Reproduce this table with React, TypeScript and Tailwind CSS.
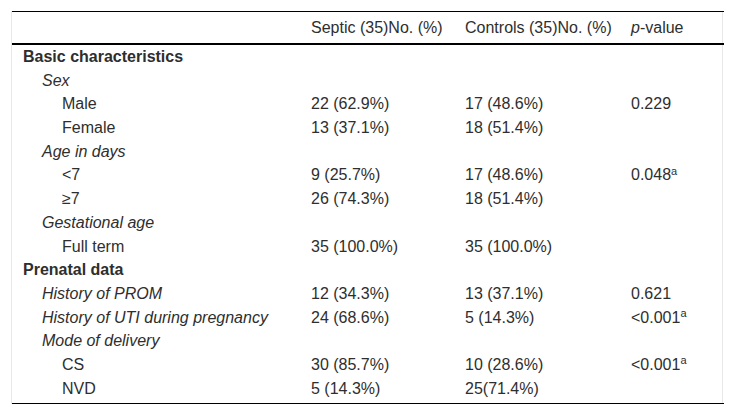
import React from "react";

type Row = {
  label: string;
  level: 0 | 1 | 2;
  kind: "bold" | "italic" | "normal";
  a?: string;
  b?: string;
  p?: string;
  sup?: boolean;
};

const rows: Row[] = [
  { label: "Basic characteristics", level: 0, kind: "bold" },
  { label: "Sex", level: 1, kind: "italic" },
  { label: "Male", level: 2, kind: "normal", a: "22 (62.9%)", b: "17 (48.6%)", p: "0.229" },
  { label: "Female", level: 2, kind: "normal", a: "13 (37.1%)", b: "18 (51.4%)" },
  { label: "Age in days", level: 1, kind: "italic" },
  { label: "<7", level: 2, kind: "normal", a: "9 (25.7%)", b: "17 (48.6%)", p: "0.048", sup: true },
  { label: "≥7", level: 2, kind: "normal", a: "26 (74.3%)", b: "18 (51.4%)" },
  { label: "Gestational age", level: 1, kind: "italic" },
  { label: "Full term", level: 2, kind: "normal", a: "35 (100.0%)", b: "35 (100.0%)" },
  { label: "Prenatal data", level: 0, kind: "bold" },
  { label: "History of PROM", level: 1, kind: "italic", a: "12 (34.3%)", b: "13 (37.1%)", p: "0.621" },
  { label: "History of UTI during pregnancy", level: 1, kind: "italic", a: "24 (68.6%)", b: "5 (14.3%)", p: "<0.001", sup: true },
  { label: "Mode of delivery", level: 1, kind: "italic" },
  { label: "CS", level: 2, kind: "normal", a: "30 (85.7%)", b: "10 (28.6%)", p: "<0.001", sup: true },
  { label: "NVD", level: 2, kind: "normal", a: "5 (14.3%)", b: "25(71.4%)" },
];

export default function App() {
  return (
    <div className="w-[734px] h-[415px] bg-white p-[11px] text-[16px] text-[#2e2e2e] font-['Liberation_Sans',Arial,sans-serif]">
      <div className="border-x border-[#e8e8e8]">
        <table className="w-full table-fixed border-collapse">
          <colgroup>
            <col className="w-[299px]" />
            <col className="w-[154px]" />
            <col className="w-[166px]" />
            <col className="w-[93px]" />
          </colgroup>
          <thead>
            <tr className="border-t border-b-2 border-black">
              <th className="h-[31px] leading-[30px] pt-[1px] px-0 pb-0" />
              <th className="h-[31px] leading-[30px] pt-[1px] px-0 pb-0 text-left font-normal whitespace-nowrap">
                Septic (35)No. (%)
              </th>
              <th className="h-[31px] leading-[30px] pt-[1px] px-0 pb-0 text-left font-normal whitespace-nowrap">
                Controls (35)No. (%)
              </th>
              <th className="h-[31px] leading-[30px] pt-[1px] px-0 pb-0 text-left font-normal whitespace-nowrap">
                <i>p</i>-value
              </th>
            </tr>
          </thead>
          <tbody className="border-b border-black">
            {rows.map((r, i) => {
              const last = i === rows.length - 1;
              const cell = last
                ? "h-[26.5px] leading-[23px] pt-0 pb-[3.5px] align-top"
                : "h-[23.7px] leading-[23px] pt-0 pb-[0.7px] align-top";
              const pad =
                r.level === 0 ? "pl-[11px]" : r.level === 1 ? "pl-[30px]" : "pl-[50px]";
              const style =
                r.kind === "bold" ? "font-bold" : r.kind === "italic" ? "italic" : "";
              return (
                <tr key={i}>
                  <td className={`${cell} ${pad} ${style} whitespace-nowrap`}>{r.label}</td>
                  <td className={`${cell} px-0 whitespace-nowrap`}>{r.a ?? ""}</td>
                  <td className={`${cell} px-0 whitespace-nowrap`}>{r.b ?? ""}</td>
                  <td className={`${cell} px-0 whitespace-nowrap`}>
                    {r.p ?? ""}
                    {r.sup ? <sup className="text-[11px]">a</sup> : null}
                  </td>
                </tr>
              );
            })}
          </tbody>
        </table>
      </div>
    </div>
  );
}
